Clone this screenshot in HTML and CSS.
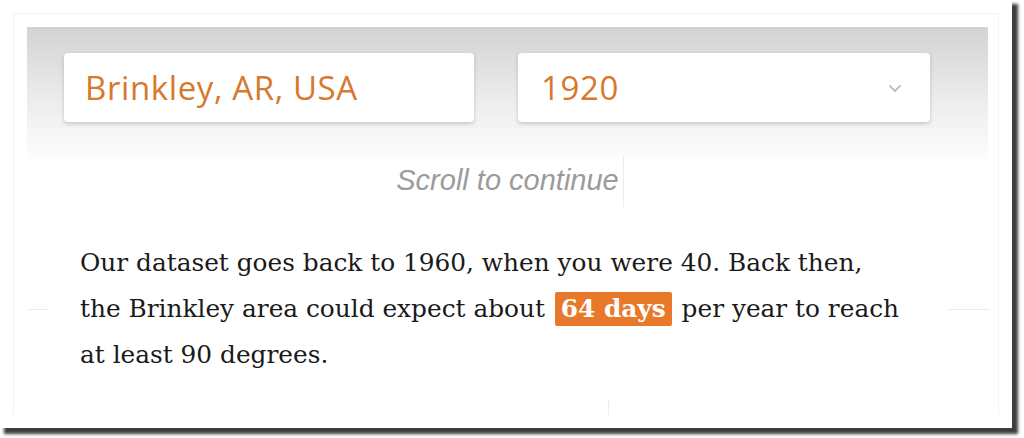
FILE: index.html
```html
<!DOCTYPE html>
<html>
<head>
<meta charset="utf-8">
<link rel="stylesheet" href="styles.css">
</head>
<body>
<div class="frame">
  <div class="inner">
    <div class="panel">
      <div class="controls">
        <div class="field">Brinkley, AR, USA</div>
        <div class="field select">
          <span>1920</span>
          <svg class="chev" width="14" height="9" viewBox="0 0 14 9"><path d="M1.5 1.5 L7 7 L12.5 1.5" fill="none" stroke="#b4b4b4" stroke-width="1.6"/></svg>
        </div>
      </div>
      <div class="scroll">Scroll to continue</div>
    </div>
    <p class="story">Our dataset goes back to 1960, when you were 40. Back then,<br>the Brinkley area could expect about <span class="hl">64 days</span> per year to reach at least 90 degrees.</p>
    <div class="guide gl"></div>
    <div class="guide gr"></div>
    <div class="guide gv"></div>
    <div class="guide gb"></div>
  </div>
</div>
</body>
</html>
```

FILE: styles.css
```css
html, body {
  margin: 0;
  padding: 0;
  background: #fff;
}
body {
  min-height: 438px;
  padding-bottom: 10px;
  box-sizing: border-box;
}
.frame {
  width: 1012px;
  height: 428px;
  background: #fff;
  box-shadow: 5px 5px 3px 1px rgba(40, 40, 40, 0.9);
  padding: 13px;
  box-sizing: border-box;
}
.inner {
  position: relative;
  height: 402px;
  box-sizing: border-box;
  border: 1px solid #f3f3f3;
  border-bottom: none;
  padding: 13px 10px 0 13px;
}
.panel {
  height: 132px;
  background: linear-gradient(to bottom, #d3d3d3 0%, #ececec 55%, #fdfdfd 100%);
  padding-top: 26px;
  box-sizing: border-box;
  position: relative;
}
.controls {
  display: grid;
  grid-template-columns: 410px 412px;
  column-gap: 44px;
  padding-left: 37px;
}
.field {
  height: 69px;
  background: #fff;
  border-radius: 4px;
  box-shadow: 0 2px 4px rgba(0, 0, 0, 0.18);
  font-family: "Open Sans", "Noto Sans", sans-serif;
  font-size: 33px;
  color: #d7782f;
  display: flex;
  align-items: center;
  padding-left: 21px;
  padding-right: 28px;
  box-sizing: border-box;
  letter-spacing: 0.6px;
}
.select {
  justify-content: space-between;
  padding-left: 23px;
}
.chev {
  margin-top: 2px;
}
.scroll {
  position: absolute;
  left: 0;
  right: 0;
  top: 137px;
  text-align: center;
  font-family: "Liberation Sans", Arial, sans-serif;
  font-style: italic;
  font-size: 29px;
  color: #9b9b9b;
}
.story {
  margin: 81px 0 0 53px;
  width: 838px;
  font-family: "DejaVu Serif", Georgia, serif;
  font-size: 24.8px;
  line-height: 46px;
  color: #1a1a1a;
}
.hl {
  background: #e8792b;
  color: #fff;
  font-weight: bold;
  padding: 2px 6px 3px;
  margin: 0 2px;
  border-radius: 2px;
}
.guide {
  position: absolute;
  background: #ececec;
}
.gl { left: 13px; top: 295px; width: 22px; height: 1px; }
.gr { left: 934px; top: 295px; width: 42px; height: 1px; }
.gv { left: 609px; top: 141px; width: 1px; height: 52px; }
.gb { left: 594px; top: 386px; width: 1px; height: 15px; }
```
